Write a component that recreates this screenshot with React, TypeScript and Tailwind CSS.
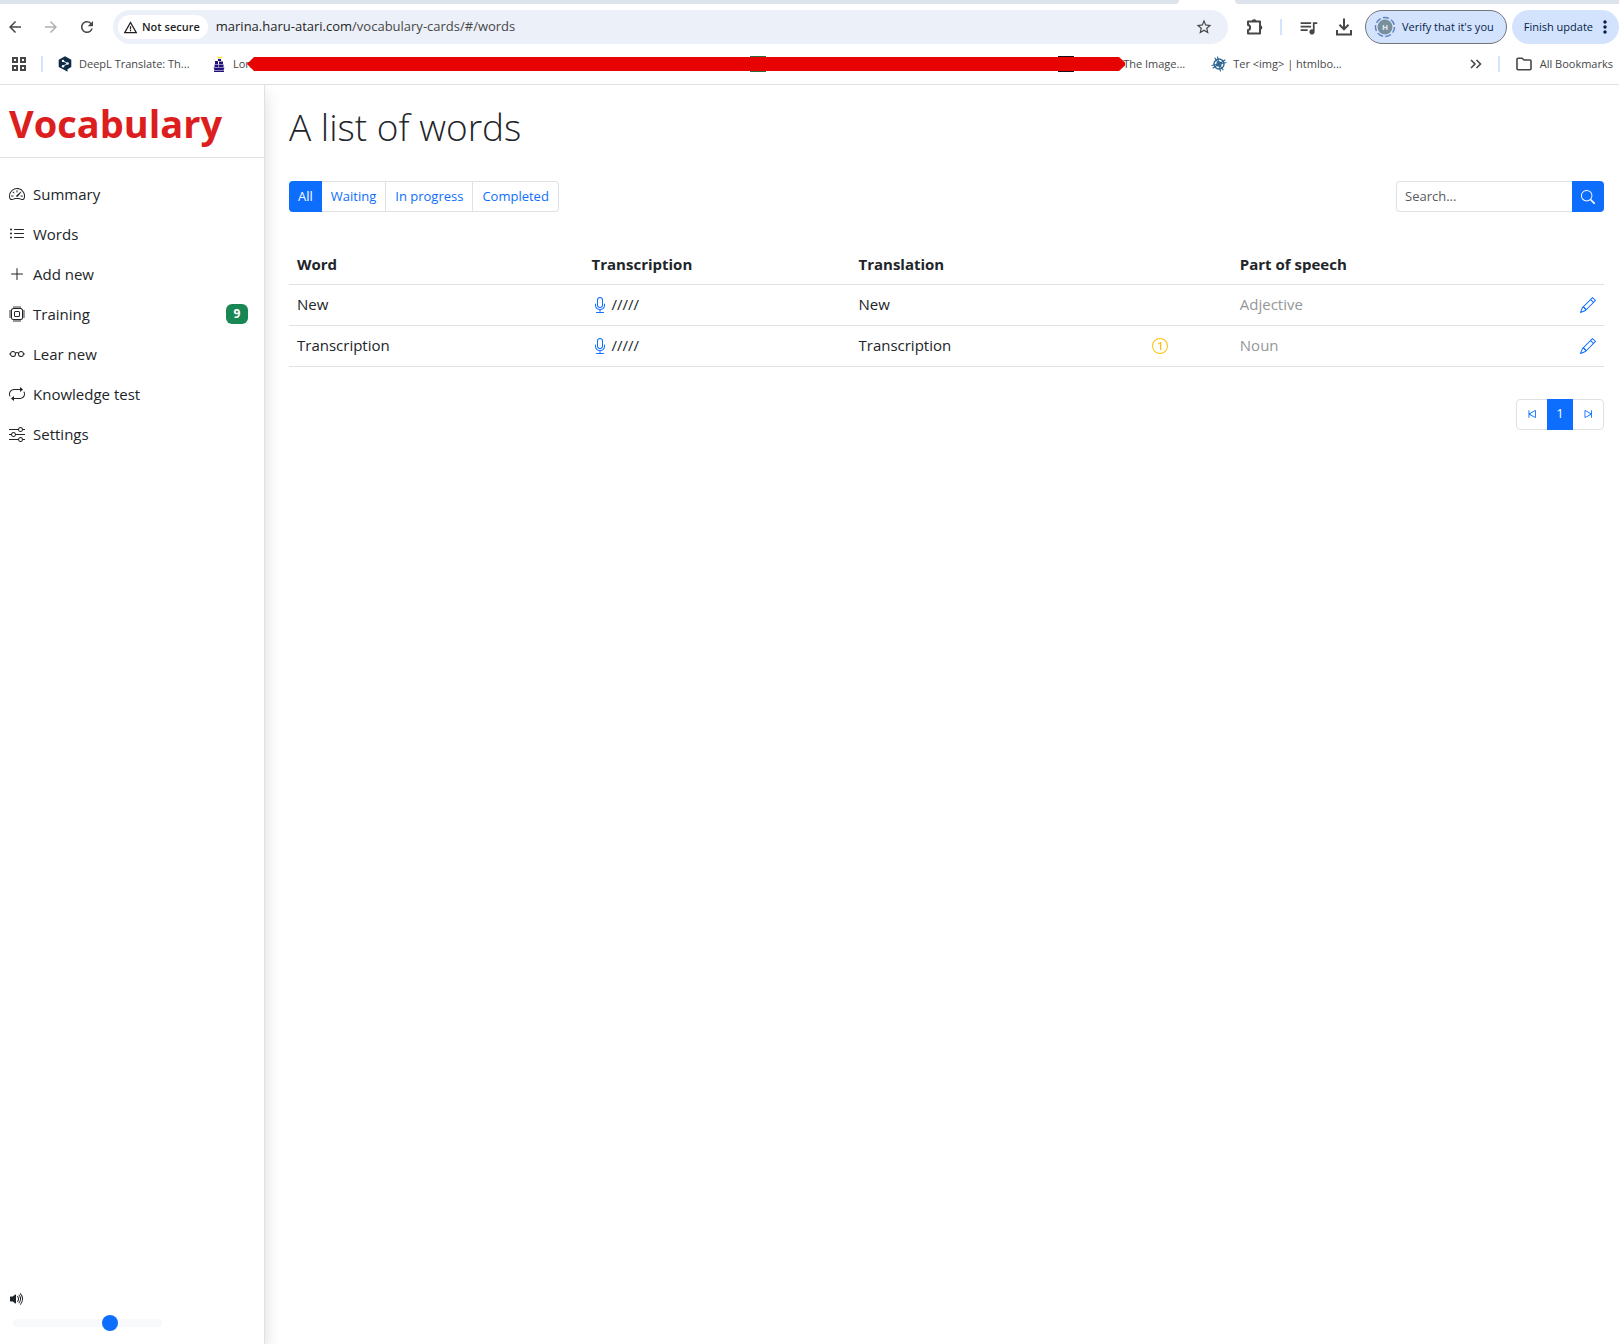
import React from "react";
import {
  Bs1Circle,
  BsCpu,
  BsEyeglasses,
  BsListUl,
  BsMic,
  BsPencil,
  BsPlusLg,
  BsRepeat,
  BsSearch,
  BsSkipEnd,
  BsSkipStart,
  BsSliders,
  BsSpeedometer2,
  BsVolumeUpFill,
} from "react-icons/bs";
import {
  MdArrowBack,
  MdArrowForward,
  MdMoreVert,
  MdQueueMusic,
  MdRefresh,
  MdStarOutline,
  MdWarningAmber,
} from "react-icons/md";

function ExtensionIcon() {
  return (
    <svg width="18" height="18" viewBox="0 0 18 18" fill="none" stroke="#474747" strokeWidth="2" strokeLinejoin="round" aria-hidden="true">
      <path d="M2 3.5H14V15.5H2V12C4.800 12 4.800 7 2 7Z" />
      <path d="M6.500 3a1.900 1.900 0 0 1 3.400 0ZM14.500 7.800a1.900 1.900 0 0 1 0 3.400Z" fill="#474747" strokeWidth="1.500" />
    </svg>
  );
}

function DownloadIcon() {
  return (
    <svg width="18" height="18" viewBox="0 0 18 18" fill="none" stroke="#474747" strokeWidth="2" aria-hidden="true">
      <path d="M9 0.500V11M4.500 6.800L9 11.300L13.500 6.800M2 12V16.500H16V12" />
    </svg>
  );
}

function AppsIcon() {
  return (
    <svg width="14" height="14" viewBox="0 0 14 14" fill="none" stroke="#474747" strokeWidth="2" aria-hidden="true">
      <path d="M1 1h4v4H1zM9 1h4v4H9zM1 9h4v4H1zM9 9h4v4H9z" />
    </svg>
  );
}

function DeepLIcon() {
  return (
    <svg width="14" height="16" viewBox="0 0 14 16" aria-hidden="true">
      <path d="M7 0.300L13.300 3.800V11L9.500 13.200V15.700L6.500 14L0.700 11V3.800Z" fill="#0f2b46" />
      <path d="M5 4.800L9.500 7.500L5 10.200" stroke="#fff" strokeWidth="0.900" fill="none" />
      <circle cx="5" cy="4.900" r="1.200" fill="#fff" />
      <circle cx="9.600" cy="7.500" r="1.200" fill="#fff" />
      <circle cx="5" cy="10.200" r="1.200" fill="#fff" />
    </svg>
  );
}

function ShipIcon() {
  return (
    <svg width="12" height="16" viewBox="0 0 12 16" aria-hidden="true">
      <path d="M4 0L6 1L10 0.500L8 2.500L5 2.500Z" fill="#f5dc28" />
      <path d="M5 3h3v2H5zM2 5h3v3H2zM6 5.500h4V8H6zM1.500 8.500H5V11H1.500zM5.500 8.500H10.500V11H5.500zM0.500 11.500H11.500L10.500 14H1.500zM1 14.600H11V16H1z" fill="#23117c" />
    </svg>
  );
}

function WheelIcon() {
  return (
    <svg width="16" height="16" viewBox="0 0 16 16" fill="none" stroke="#2f6690" aria-hidden="true">
      <circle cx="8" cy="8" r="5" strokeWidth="1.400" />
      <circle cx="8" cy="8" r="2" strokeWidth="1.400" />
      <path d="M6.500 0.500L9.500 15.500M0.500 9.500L15.500 6.500M3.700 1.700L12.300 14.300M1.700 12.300L14.300 3.700" strokeWidth="1.100" />
    </svg>
  );
}

function FolderIcon() {
  return (
    <svg width="16" height="14" viewBox="0 0 16 14" fill="none" stroke="#474747" strokeWidth="1.600" strokeLinejoin="round" aria-hidden="true">
      <path d="M1 2.200V11.800a1 1 0 0 0 1 1H14a1 1 0 0 0 1-1V4a1 1 0 0 0-1-1H8L6.200 1.200H2a1 1 0 0 0-1 1Z" />
    </svg>
  );
}

function ChevronsIcon() {
  return (
    <svg width="12" height="10" viewBox="0 0 12 10" fill="none" stroke="#474747" strokeWidth="1.600" aria-hidden="true">
      <path d="M1 1L5 5L1 9M6.500 1L10.500 5L6.500 9" />
    </svg>
  );
}

function ProfileIcon() {
  return (
    <svg width="22" height="22" viewBox="0 0 22 22" aria-hidden="true">
      <circle cx="11" cy="11" r="9.500" fill="none" stroke="#5b7fc0" strokeWidth="1.400" strokeDasharray="6 2.500" />
      <circle cx="11" cy="11" r="7.500" fill="#78909c" />
      <text x="11" y="14" textAnchor="middle" fontSize="8" fontFamily="Roboto, sans-serif" fontWeight="700" fill="#e8eef2">
        H
      </text>
    </svg>
  );
}

function BrowserChrome() {
  return (
    <header className="border-b border-[#e0e0e0] bg-white">
      <div className="flex h-1 justify-between">
        <div className="mr-14 grow rounded-br-lg bg-[#dde3ea]" />
        <div className="w-96 rounded-bl-lg bg-[#dde3ea]" />
      </div>

      <div className="flex h-[46px] items-center">
        <div className="flex items-center gap-[18px] pl-[6px] text-lg text-[#474747]">
          <button aria-label="Back"><MdArrowBack /></button>
          <button aria-label="Forward" className="text-[#b0b0b0]"><MdArrowForward /></button>
          <button aria-label="Reload"><MdRefresh /></button>
        </div>
        <div className="ml-[17px] flex h-[34px] grow items-center rounded-full bg-[#ecf0f9] pr-2 pl-[5px]">
          <button className="flex h-6 items-center gap-1 rounded-full bg-white pr-2 pl-[5px] text-[11px] font-semibold text-[#1f1f1f]">
            <MdWarningAmber className="size-[15px]" />
            <span>Not secure</span>
          </button>
          <div role="textbox" aria-label="Address" className="ml-2 grow text-[13px] text-[#1f1f1f]">
            marina.haru-atari.com<span className="text-[#474747]">/vocabulary-cards/#/words</span>
          </div>
          <button aria-label="Bookmark this page" className="mr-[7px] text-lg text-[#474747]"><MdStarOutline /></button>
        </div>
        <div className="flex items-center pl-[18px]">
          <button aria-label="Extensions"><ExtensionIcon /></button>
          <span className="ml-4 h-4 w-0.5 bg-[#d3e3fd]" />
          <button aria-label="Media controls" className="ml-4 text-[21px] text-[#474747]"><MdQueueMusic /></button>
          <button aria-label="Downloads" className="ml-4"><DownloadIcon /></button>
          <button className="ml-3 flex h-[34px] items-center gap-1.5 rounded-full border border-[#70757a] bg-[#d3e3fd] pr-3 pl-2 text-[11px] text-[#041e49]">
            <ProfileIcon />
            <span>Verify that it&#39;s you</span>
          </button>
          <button className="ml-[5px] flex h-[34px] items-center gap-0.5 rounded-full bg-[#d3e3fd] pr-1 pl-3 text-[11px] text-[#041e49]">
            <span>Finish update</span>
            <MdMoreVert className="text-xl" />
          </button>
        </div>
      </div>

      <nav aria-label="Bookmarks" className="relative flex h-[34px] items-start pt-[6px] text-[11px] leading-4 text-[#474747]">
        <button aria-label="Apps" className="ml-3 pt-px"><AppsIcon /></button>
        <span className="ml-[15px] h-4 w-0.5 bg-[#d3e3fd]" />
        <a href="#deepl" className="ml-[15px] flex w-[155px] items-center gap-[7px]">
          <DeepLIcon />
          <span>DeepL Translate: Th...</span>
        </a>
        <a href="#longman" className="flex items-center gap-2">
          <ShipIcon />
          <span>Lon</span>
        </a>
        <div className="flex grow justify-end">
          <span className="mr-[292px] size-4 bg-[#2f6b3c]" />
          <span className="mr-[49px] size-4 bg-[#1c0f1c]" />
          <a href="#image">The Image...</a>
        </div>
        <a href="#htmlbook" className="ml-[26px] flex items-center gap-1.5">
          <WheelIcon />
          <span>Ter &lt;img&gt; | htmlbo...</span>
        </a>
        <button aria-label="More bookmarks" className="ml-[128px] pt-[3px]"><ChevronsIcon /></button>
        <span className="ml-4 h-4 w-0.5 bg-[#d3e3fd]" />
        <button className="mr-[6px] ml-4 flex items-center gap-2">
          <FolderIcon />
          <span>All Bookmarks</span>
        </button>
        <div className="absolute top-[7px] right-[494px] left-[247px] h-3.5 bg-[#e60302] [clip-path:polygon(0_50%,7px_0,calc(100%-6px)_0,100%_40%,100%_60%,calc(100%-6px)_100%,7px_100%)]" />
      </nav>
    </header>
  );
}

const navItems = [
  { label: "Summary", Icon: BsSpeedometer2 },
  { label: "Words", Icon: BsListUl },
  { label: "Add new", Icon: BsPlusLg },
  { label: "Training", Icon: BsCpu, badge: 9 },
  { label: "Lear new", Icon: BsEyeglasses },
  { label: "Knowledge test", Icon: BsRepeat },
  { label: "Settings", Icon: BsSliders },
];

function Sidebar() {
  return (
    <aside className="flex w-[265px] shrink-0 flex-col border-r border-[#dee2e6] bg-white shadow-[0_8px_16px_rgba(0,0,0,0.15)]">
      <div className="border-b border-[#dee2e6] px-[9px] pt-2 pb-1">
        <a href="#/" className="text-[38px] leading-[60px] font-bold text-[#dc1e1e]">Vocabulary</a>
      </div>
      <nav aria-label="Main" className="pt-4">
        {navItems.map(({ label, Icon, badge }) => (
          <a key={label} href="#/words" className="flex h-10 items-center gap-2 pr-4 pl-[9px]">
            <Icon className="size-4" />
            <span>{label}</span>
            {badge && (
              <span className="ml-auto flex h-5 w-[22px] items-center justify-center rounded-md bg-[#198754] text-xs font-bold text-white">
                {badge}
              </span>
            )}
          </a>
        ))}
      </nav>
      <div className="mt-auto flex flex-col items-start gap-2 pb-[13px] pl-[9px]">
        <BsVolumeUpFill className="size-4" />
        <input
          type="range"
          aria-label="Volume"
          min="0"
          max="100"
          defaultValue="67"
          className="ml-1 h-4 w-[149px] appearance-none bg-transparent [&::-webkit-slider-runnable-track]:h-2 [&::-webkit-slider-runnable-track]:rounded-full [&::-webkit-slider-runnable-track]:bg-[#f8f9fa] [&::-webkit-slider-thumb]:-mt-1 [&::-webkit-slider-thumb]:size-4 [&::-webkit-slider-thumb]:appearance-none [&::-webkit-slider-thumb]:rounded-full [&::-webkit-slider-thumb]:bg-[#0d6efd]"
        />
      </div>
    </aside>
  );
}

const words = [
  { word: "New", transcription: "/////", translation: "New", partOfSpeech: "Adjective", single: false },
  { word: "Transcription", transcription: "/////", translation: "Transcription", partOfSpeech: "Noun", single: true },
];

function WordsTable() {
  return (
    <table className="mt-8 w-full table-fixed text-left">
      <colgroup>
        <col className="w-[22.4%]" />
        <col className="w-[20.3%]" />
        <col className="w-[22.3%]" />
        <col className="w-[6.7%]" />
        <col />
        <col className="w-8" />
      </colgroup>
      <thead>
        <tr className="h-10 border-b border-[#dee2e6]">
          <th className="px-2 font-bold">Word</th>
          <th className="px-2 font-bold">Transcription</th>
          <th className="px-2 font-bold" colSpan={2}>Translation</th>
          <th className="px-2 font-bold">Part of speech</th>
          <th aria-label="Actions" />
        </tr>
      </thead>
      <tbody>
        {words.map((w) => (
          <tr key={w.word} className="h-[41px] border-b border-[#dee2e6]">
            <td className="px-2">{w.word}</td>
            <td className="px-2">
              <div className="flex items-center gap-1">
                <button aria-label={`Listen to ${w.word}`} className="text-[#0d6efd]"><BsMic className="size-4" /></button>
                <span>{w.transcription}</span>
              </div>
            </td>
            <td className="px-2">{w.translation}</td>
            <td className="px-2 text-[#ffc107]">{w.single && <Bs1Circle className="size-4" />}</td>
            <td className="px-2 text-[#959798]">{w.partOfSpeech}</td>
            <td className="px-2">
              <button aria-label={`Edit ${w.word}`} className="block text-[#0d6efd]"><BsPencil className="size-4" /></button>
            </td>
          </tr>
        ))}
      </tbody>
    </table>
  );
}

const filters = ["All", "Waiting", "In progress", "Completed"];

export default function App() {
  return (
    <div className="flex min-h-screen flex-col bg-white font-['Open_Sans','Noto_Sans',sans-serif] text-[15px] text-[#212529]">
      <BrowserChrome />
      <div className="flex grow overflow-hidden">
        <Sidebar />
        <main className="min-w-0 grow pr-[15px] pl-6">
          <h1 className="pt-3 text-[37px] leading-[60px] font-light">A list of words</h1>
          <div className="mt-6 flex items-center justify-between">
            <div role="group" aria-label="Filter" className="flex h-[31px] text-[13px] text-[#0d6efd]">
              {filters.map((f, i) => (
                <button
                  key={f}
                  className={
                    i === 0
                      ? "rounded-l bg-[#0d6efd] px-[9px] pt-px text-white"
                      : "border-y border-r border-[#dee2e6] px-[9px] pt-px last:rounded-r"
                  }
                >
                  {f}
                </button>
              ))}
            </div>
            <form className="flex h-[31px]">
              <input
                type="text"
                aria-label="Search"
                placeholder="Search..."
                className="w-44 rounded-l border border-r-0 border-[#dee2e6] px-2 pt-px text-[13px] placeholder:text-[#595c5f]"
              />
              <button type="button" aria-label="Run search" className="flex w-8 items-center justify-center rounded-r bg-[#0d6efd] text-white">
                <BsSearch className="size-3.5" />
              </button>
            </form>
          </div>
          <WordsTable />
          <nav aria-label="Pagination" className="mt-8 flex justify-end">
            <div className="flex h-[31px] rounded border border-[#dee2e6] text-[13px] text-[#0d6efd]">
              <button aria-label="First page" className="flex w-[30px] items-center justify-center"><BsSkipStart className="size-3.5" /></button>
              <button aria-current="page" className="-my-px w-[26px] bg-[#0d6efd] text-white">1</button>
              <button aria-label="Last page" className="flex w-[30px] items-center justify-center"><BsSkipEnd className="size-3.5" /></button>
            </div>
          </nav>
        </main>
      </div>
    </div>
  );
}
